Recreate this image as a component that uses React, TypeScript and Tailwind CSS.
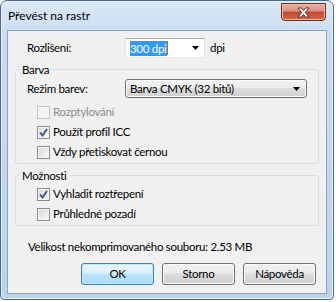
import React from "react";

const font = { fontFamily: 'Lato, "Liberation Sans", sans-serif', letterSpacing: "-0.3px" };

function CheckMark() {
  return (
    <svg width="9" height="9" viewBox="0 0 9 9" className="block">
      <path d="M1 4.5 L3.5 7.5 L8 1" fill="none" stroke="#3c4f8c" strokeWidth="1.8" />
    </svg>
  );
}

function CheckRow({ label, checked, disabled }: { label: string; checked?: boolean; disabled?: boolean }) {
  return (
    <div className="flex h-[20px] items-start pl-[21px]">
      <div
        className={
          "mt-[4px] flex h-[13px] w-[13px] items-center justify-center border " +
          (disabled
            ? "border-[#c5c5c5] bg-[#f4f4f4]"
            : "border-[#8e8f8f] bg-gradient-to-br from-[#d6d6d6] to-[#fbfbfb] shadow-[inset_0_0_0_1px_#f4f4f4]")
        }
      >
        {checked && <CheckMark />}
      </div>
      <span className={"ml-[3px] leading-[20px] " + (disabled ? "text-[#8d8d8d]" : "text-black")}>{label}</span>
    </div>
  );
}

function Group({ title, children, className }: { title: string; children: React.ReactNode; className?: string }) {
  return (
    <div className={"mx-[7px] rounded-[3px] border border-[#d5dfe5] " + (className ?? "")}>
      <div className="-mt-[8px] ml-[4px] w-fit bg-[#f0f0f0] px-[2px] leading-[15px]">{title}</div>
      {children}
    </div>
  );
}

function Btn({ label, primary }: { label: string; primary?: boolean }) {
  return (
    <div
      className={
        "flex h-[22px] w-[73px] items-center justify-center rounded-[3px] border " +
        (primary
          ? "border-[#3c7fb1] bg-[linear-gradient(#eaf6fd_0%,#d9f0fc_45%,#bee6fd_50%,#a7d9f5_100%)] shadow-[inset_0_0_0_1px_#c0e8fb]"
          : "border-[#707070] bg-[linear-gradient(#f2f2f2_0%,#ebebeb_45%,#dddddd_50%,#cfcfcf_100%)] shadow-[inset_0_0_0_1px_#fcfcfc]")
      }
    >
      {label}
    </div>
  );
}

function Arrow() {
  return (
    <svg width="7" height="4" viewBox="0 0 7 4" className="block">
      <path d="M0 0 H7 L3.5 4 Z" fill="#000" />
    </svg>
  );
}

export default function App() {
  return (
    <div className="h-[302px] w-[336px] bg-white text-[11.5px] text-black" style={font}>
      <div className="h-[300px] w-[334px] rounded-t-[7px] rounded-b-[4px] border border-[#4d6a8d] bg-[linear-gradient(180deg,#dbe9f7_0%,#c9dcf1_12%,#bcd3ec_100%)] shadow-[inset_0_0_0_1px_#e8f1fa]">
        <div className="flex h-[29px] items-start justify-between">
          <div className="ml-[7px] mt-[7px] text-[12px] leading-[16px] tracking-normal">Převést na rastr</div>
          <div className="mr-[7px] mt-[2px] flex h-[18px] w-[45px] items-center justify-center rounded-b-[4px] border border-[#6e2b22] bg-[linear-gradient(180deg,#eab3a4_0%,#d88f7b_45%,#c4452c_50%,#d06a4b_100%)] shadow-[inset_0_0_0_1px_#f0b9a8]">
            <svg width="13" height="11" viewBox="0 0 13 11">
              <path
                d="M1 1 H4.5 L6.5 3.5 L8.5 1 H12 L8.3 5.5 L12 10 H8.5 L6.5 7.5 L4.5 10 H1 L4.7 5.5 Z"
                fill="#fff"
                stroke="#4a1e18"
                strokeWidth="0.9"
                strokeLinejoin="round"
              />
            </svg>
          </div>
        </div>

        <div className="mx-[6px] h-[264px] border border-[#8ea3bd] bg-[#f0f0f0]">
          <div className="mt-[7px] flex h-[20px] items-center pl-[19px]">
            <span className="w-[98px]">Rozlišení:</span>
            <div className="flex h-[20px] w-[80px] items-center border border-[#abadb3] border-l-[#e2e3ea] border-r-[#dbdfe6] border-b-[#e3e9ef] bg-white pl-[4px] pr-[5px]">
              <span className="bg-[#3399ff] leading-[15px] text-white">300 dpi</span>
              <span className="h-[14px] w-[1px] bg-[#cc6600]" />
              <span className="flex-1" />
              <Arrow />
            </div>
            <span className="ml-[5px]">dpi</span>
          </div>

          <Group title="Barva" className="mt-[11px] pb-[1px]">
            <div className="mt-[2px] flex h-[19px] items-center pl-[11px]">
              <span className="w-[98px]">Režim barev:</span>
              <div className="flex h-[19px] w-[182px] items-center rounded-[3px] border border-[#707070] bg-[linear-gradient(#f2f2f2_0%,#ebebeb_45%,#dddddd_50%,#cfcfcf_100%)] pl-[4px] pr-[6px] shadow-[inset_0_0_0_1px_#fcfcfc]">
                <span className="flex-1">Barva CMYK (32 bitů)</span>
                <Arrow />
              </div>
            </div>
            <div className="mt-[4px]">
              <CheckRow label="Rozptylování" disabled />
              <CheckRow label="Použít profil ICC" checked />
              <CheckRow label="Vždy přetiskovat černou" />
            </div>
          </Group>

          <Group title="Možnosti" className="mt-[11px] pb-[1px]">
            <div className="mt-[1px]">
              <CheckRow label="Vyhladit roztřepení" checked />
              <CheckRow label="Průhledné pozadí" />
            </div>
          </Group>

          <div className="mt-[13px] pl-[20px] leading-[15px]">Velikost nekomprimovaného souboru: 2.53 MB</div>

          <div className="mt-[9px] flex justify-end gap-[8px] pr-[10px]">
            <Btn label="OK" primary />
            <Btn label="Storno" />
            <Btn label="Nápověda" />
          </div>
        </div>
      </div>
    </div>
  );
}
